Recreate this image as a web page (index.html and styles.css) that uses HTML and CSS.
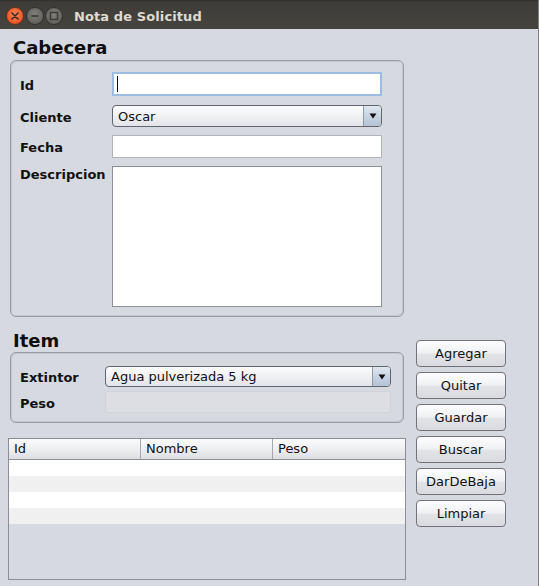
FILE: index.html
```html
<!DOCTYPE html>
<html lang="es">
<head>
<meta charset="utf-8">
<title>Nota de Solicitud</title>
<link rel="stylesheet" href="styles.css">
</head>
<body>
<div class="window">
  <div class="titlebar">
    <div class="wbtns">
      <span class="wbtn close"><svg width="10" height="10" viewBox="0 0 10 10"><path d="M2 2 L8 8 M8 2 L2 8" stroke="#3a2a22" stroke-width="1.6" stroke-linecap="round"/></svg></span>
      <span class="wbtn"><svg width="10" height="10" viewBox="0 0 10 10"><path d="M1.5 5 H8.5" stroke="#3a3935" stroke-width="1.6"/></svg></span>
      <span class="wbtn"><svg width="10" height="10" viewBox="0 0 10 10"><rect x="1.5" y="1.5" width="7" height="7" fill="none" stroke="#3a3935" stroke-width="1.4"/></svg></span>
    </div>
    <div class="wtitle">Nota de Solicitud</div>
  </div>
  <div class="main">
    <div class="left">
      <div class="heading h-cab">Cabecera</div>
      <div class="group cab">
        <div class="row r-id">
          <label class="lbl">Id</label>
          <div class="field focus"><span class="caret"></span></div>
        </div>
        <div class="row r-cli">
          <label class="lbl">Cliente</label>
          <div class="combo"><span class="ctext">Oscar</span><span class="carrow"><svg width="8" height="6" viewBox="0 0 8 6"><path d="M0.5 0.5 H7.5 L4 5.5 Z" fill="#111"/></svg></span></div>
        </div>
        <div class="row r-fec">
          <label class="lbl">Fecha</label>
          <div class="field"></div>
        </div>
        <div class="row r-desc">
          <label class="lbl top">Descripcion</label>
          <div class="area"></div>
        </div>
      </div>
      <div class="heading h-item">Item</div>
      <div class="group item">
        <div class="row2 r-ext">
          <label class="lbl">Extintor</label>
          <div class="combo"><span class="ctext">Agua pulverizada 5 kg</span><span class="carrow"><svg width="8" height="6" viewBox="0 0 8 6"><path d="M0.5 0.5 H7.5 L4 5.5 Z" fill="#111"/></svg></span></div>
        </div>
        <div class="row2 r-peso">
          <label class="lbl">Peso</label>
          <div class="field disabled"></div>
        </div>
      </div>
      <div class="table">
        <div class="thead">
          <div class="th">Id</div>
          <div class="th">Nombre</div>
          <div class="th last">Peso</div>
        </div>
        <div class="trow"></div>
        <div class="trow alt"></div>
        <div class="trow"></div>
        <div class="trow alt"></div>
      </div>
    </div>
    <div class="buttons">
      <button class="btn">Agregar</button>
      <button class="btn">Quitar</button>
      <button class="btn">Guardar</button>
      <button class="btn">Buscar</button>
      <button class="btn">DarDeBaja</button>
      <button class="btn">Limpiar</button>
    </div>
  </div>
</div>
</body>
</html>
```
FILE: styles.css
```css
* { box-sizing: border-box; }
html, body { margin: 0; padding: 0; }
body {
  width: 539px;
  height: 586px;
  overflow: hidden;
  background: #d6d9df;
  font-family: "DejaVu Sans", sans-serif;
  font-size: 13px;
  color: #111;
}
.window {
  width: 539px;
  height: 586px;
  border-right: 1px solid #808287;
  background: #d6d9df;
}
.titlebar {
  height: 29px;
  background: linear-gradient(#2f2e2b 0, #3d3c38 2px, #45443f 100%);
  display: flex;
  align-items: center;
}
.wbtns {
  display: flex;
  gap: 1.5px;
  margin-left: 6px;
  margin-top: 3px;
}
.wbtn {
  width: 18px;
  height: 18px;
  border-radius: 50%;
  background: radial-gradient(circle at 50% 40%, #807f79, #64635e 70%, #55544f);
  border: 1px solid #33322e;
  display: flex;
  align-items: center;
  justify-content: center;
}
.wbtn.close {
  background: radial-gradient(circle at 50% 40%, #f7835a, #ea5a2a 65%, #d24b1d);
  border-color: #6a3018;
}
.wtitle {
  margin-left: 11px;
  margin-top: 3px;
  color: #dfdbd2;
  font-weight: bold;
  font-size: 13px;
  letter-spacing: 0.1px;
}
.main {
  display: flex;
}
.left {
  width: 398px;
  margin-left: 8px;
}
.heading {
  font-weight: bold;
  font-size: 18px;
  line-height: 20px;
  padding-left: 5px;
  color: #0e0e0e;
}
.h-cab { margin-top: 9px; margin-bottom: 2px; }
.h-item { margin-top: 14px; margin-bottom: 1px; }
.group {
  margin: 0 2px;
  border: 1px solid #999ca2;
  border-radius: 6px;
  box-shadow: inset 1px 1px 0 #c4c7cd, inset -1px -1px 0 #c4c7cd;
}
.cab {
  height: 257px;
  padding: 11px 21px 0 9px;
}
.row {
  display: grid;
  grid-template-columns: 92px 270px;
  align-items: center;
}
.r-id { height: 24px; }
.r-cli { height: 22px; margin-top: 9px; }
.r-fec { height: 23px; margin-top: 8px; }
.r-desc { height: 141px; margin-top: 8px; align-items: start; }
.lbl {
  font-weight: bold;
  font-size: 13px;
  color: #111;
  padding-top: 2px;
}
.lbl.top { padding-top: 1px; }
.field {
  height: 100%;
  background: #fff;
  border: 1px solid #b2b4b8;
  position: relative;
}
.field.focus {
  border: 2px solid #9dbde0;
}
.caret {
  position: absolute;
  left: 3px;
  top: 2px;
  width: 1px;
  height: 16px;
  background: #111;
}
.field.disabled {
  background: #dcdee3;
  border: 1px solid #d0d3d8;
}
.area {
  height: 141px;
  background: #fff;
  border: 1px solid #8d9096;
}
.combo {
  height: 100%;
  border: 1px solid #62666e;
  border-radius: 4px;
  background: linear-gradient(#fcfcfd 0%, #f1f2f4 45%, #e2e4e8 100%);
  display: flex;
  align-items: center;
  overflow: hidden;
}
.ctext {
  flex: 1;
  padding-left: 5px;
  font-size: 13px;
  color: #111;
}
.carrow {
  width: 18px;
  height: 100%;
  border-left: 1px solid #8e9aa8;
  background: linear-gradient(#dfe7f0 0%, #c7d4e2 50%, #b3c3d5 100%);
  display: flex;
  align-items: center;
  justify-content: center;
}
.item {
  height: 71px;
  padding: 13px 12px 0 9px;
}
.row2 {
  display: grid;
  grid-template-columns: 85px 286px;
  align-items: center;
}
.r-ext { height: 21px; }
.r-peso { height: 22px; margin-top: 4px; }
.table {
  margin-top: 15px;
  height: 142px;
  border: 1px solid #8b8e94;
  background: #d6d9df;
}
.thead {
  display: grid;
  grid-template-columns: 132px 132px 1fr;
  height: 21px;
  border-bottom: 1px solid #8f9298;
  background: linear-gradient(#fbfbfc 0%, #eeeff1 50%, #dcdee2 100%);
}
.th {
  border-right: 1px solid #a4a7ad;
  padding-left: 5px;
  font-size: 13px;
  line-height: 20px;
  color: #111;
}
.th.last { border-right: none; }
.trow {
  height: 16px;
  background: #fff;
}
.trow.alt { background: #f0f0f0; }
.buttons {
  margin-left: 10px;
  padding-top: 311px;
  display: flex;
  flex-direction: column;
  gap: 5px;
}
.btn {
  width: 90px;
  height: 27px;
  margin: 0;
  padding: 0;
  border: 1px solid #70737a;
  border-radius: 4px;
  background: linear-gradient(#fdfdfd 0%, #f1f2f4 45%, #e1e3e7 55%, #d8dadf 100%);
  font-family: "DejaVu Sans", sans-serif;
  font-size: 13px;
  color: #111;
}
```
